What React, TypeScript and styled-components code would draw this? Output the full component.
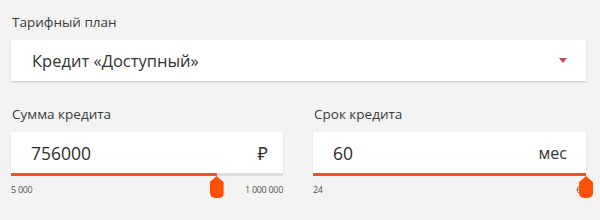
import styled, { createGlobalStyle } from 'styled-components'

const GlobalStyle = createGlobalStyle`
    body {
        margin: 0;
        background: #f3f3f3;
        font-family: 'Open Sans', 'Noto Sans', sans-serif;
        color: #333;
    }
`

const ACCENT = '#e8572b'
const THUMB = '#ff5005'

type Range = {
    label: string
    value: string
    unit: string
    unitSize: number
    unitGap: number
    min: string
    max: string
    percent: number
}

const ranges: Range[] = [
    { label: 'Сумма кредита', value: '756000', unit: '₽', unitSize: 18, unitGap: 15, min: '5 000', max: '1 000 000', percent: 75.6 },
    { label: 'Срок кредита', value: '60', unit: 'мес', unitSize: 16, unitGap: 19, min: '24', max: '60', percent: 100 },
]

export default function App() {
    return (
        <Page>
            <GlobalStyle />
            <Field>
                <Label>Тарифный план</Label>
                <Select>
                    <SelectText>Кредит «Доступный»</SelectText>
                    <Caret />
                </Select>
            </Field>
            <Row>
                {ranges.map((r) => (
                    <Field key={r.label}>
                        <Label>{r.label}</Label>
                        <InputBox $unitGap={r.unitGap}>
                            <Value>{r.value}</Value>
                            <Unit $size={r.unitSize}>{r.unit}</Unit>
                        </InputBox>
                        <Track>
                            <Fill style={{ width: `${r.percent}%` }} />
                            <Thumb style={{ left: `${r.percent}%` }} />
                        </Track>
                        <Limits>
                            <span>{r.min}</span>
                            <span>{r.max}</span>
                        </Limits>
                    </Field>
                ))}
            </Row>
            <Field>
                <Label>Процентная ставка</Label>
            </Field>
        </Page>
    )
}

const Page = styled.div`
    padding: 13px 14px 0 11px;
    height: 220px;
    box-sizing: border-box;
    overflow: hidden;
    display: flex;
    flex-direction: column;
    gap: 24px;
`

const Row = styled.div`
    display: grid;
    grid-template-columns: 272px 273px;
    column-gap: 30px;
    margin-bottom: -5px;
`

const Field = styled.div`
    display: flex;
    flex-direction: column;
`

const Label = styled.div`
    font-size: 13.5px;
    line-height: 18px;
    color: #3a3a3a;
    margin-bottom: 9px;
    padding-left: 1px;
`

const Select = styled.div`
    height: 41px;
    background: #fff;
    box-shadow: 0 1px 2px rgba(0, 0, 0, 0.18);
    display: flex;
    align-items: center;
    justify-content: space-between;
    padding: 0 19px 0 21px;
    box-sizing: border-box;
`

const SelectText = styled.span`
    font-size: 16.5px;
    color: #333;
`

const Caret = styled.span`
    width: 0;
    height: 0;
    border-left: 4px solid transparent;
    border-right: 4px solid transparent;
    border-top: 5px solid #d2464a;
`

const InputBox = styled.div<{ $unitGap: number }>`
    height: 41px;
    background: #fff;
    box-shadow: 0 1px 2px rgba(0, 0, 0, 0.1);
    display: flex;
    align-items: center;
    justify-content: space-between;
    padding: 0 ${(p) => p.$unitGap}px 0 20px;
    box-sizing: border-box;
`

const Value = styled.span`
    font-size: 17.5px;
    color: #2d2d2d;
`

const Unit = styled.span<{ $size: number }>`
    font-size: ${(p) => p.$size}px;
    color: #333;
`

const Track = styled.div`
    position: relative;
    height: 3px;
    background: #dcdcdc;
`

const Fill = styled.div`
    height: 100%;
    background: ${ACCENT};
`

const Thumb = styled.div`
    position: absolute;
    top: 3px;
    width: 14px;
    height: 22px;
    margin-left: -7px;
    background: ${THUMB};
    border-radius: 3px 3px 5px 5px;
    clip-path: polygon(50% 0, 100% 28%, 100% 100%, 0 100%, 0 28%);
`

const Limits = styled.div`
    display: flex;
    justify-content: space-between;
    font-size: 9px;
    color: #555;
    margin-top: 7px;
    letter-spacing: -0.3px;
`
